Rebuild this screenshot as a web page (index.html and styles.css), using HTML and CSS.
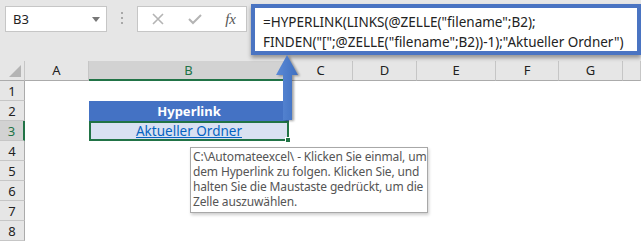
FILE: index.html
```html
<!DOCTYPE html>
<html lang="de">
<head>
    <meta charset="UTF-8">
    <title>HYPERLINK - Aktueller Ordner</title>
    <link rel="stylesheet" href="styles.css">
</head>
<body>
    <div class="toolbar">
        <div class="name-box">
            <span>B3</span>
            <span class="drop"></span>
        </div>
        <div class="grip"><i></i><i></i><i></i></div>
        <div class="fx-box">
            <svg width="14" height="14" viewBox="0 0 14 14"><path d="M2 2 L12 12 M12 2 L2 12" stroke="#b4b4b4" stroke-width="1.6" fill="none"/></svg>
            <svg width="16" height="14" viewBox="0 0 16 14"><path d="M2 7 L6 11 L14 3" stroke="#b4b4b4" stroke-width="2" fill="none"/></svg>
            <span class="fx">fx</span>
        </div>
        <div class="formula">
            =HYPERLINK(LINKS(@ZELLE("filename";B2);<br>
            FINDEN("[";@ZELLE("filename";B2))-1);"Aktueller Ordner")
        </div>
    </div>

    <div class="sheet">
        <div class="corner"><span></span></div>
        <div class="col">A</div>
        <div class="col active">B</div>
        <div class="col">C</div>
        <div class="col">D</div>
        <div class="col">E</div>
        <div class="col">F</div>
        <div class="col">G</div>
        <div class="col"></div>

        <div class="row-h">1</div>
        <div class="row-h">2</div>
        <div class="cell head">Hyperlink</div>
        <div class="row-h active">3</div>
        <div class="cell link"><a href="#">Aktueller Ordner</a><span class="handle"></span></div>
        <div class="row-h">4</div>
        <div class="row-h">5</div>
        <div class="row-h">6</div>
        <div class="row-h">7</div>
        <div class="row-h">8</div>

        <svg class="arrow" width="26" height="70" viewBox="0 0 26 70">
            <defs>
                <linearGradient id="shaft" x1="0" x2="1">
                    <stop offset="0" stop-color="#5b8ad6"/>
                    <stop offset="1" stop-color="#3f6fc0"/>
                </linearGradient>
            </defs>
            <path d="M12 1 L23 21 L17 21 L17 66 L8 66 L8 21 L1 21 Z" fill="url(#shaft)"/>
        </svg>

        <div class="tip">C:\Automateexcel\ - Klicken Sie einmal, um<br>dem Hyperlink zu folgen. Klicken Sie, und<br>halten Sie die Maustaste gedrückt, um die<br>Zelle auszuwählen.</div>
    </div>
</body>
</html>
```

FILE: styles.css
```css
* {
    margin: 0;
    padding: 0;
    box-sizing: border-box;
}

body {
    width: 641px;
    height: 241px;
    overflow: hidden;
    font-family: 'Noto Sans', 'Open Sans', sans-serif;
    background: #fff;
    color: #222;
}

.toolbar {
    height: 61px;
    background: #e6e6e6;
    display: flex;
    align-items: flex-start;
    padding-left: 5px;
}

.name-box {
    margin-top: 6px;
    width: 102px;
    height: 26px;
    background: #fff;
    border: 1px solid #c6c6c6;
    display: flex;
    align-items: center;
    justify-content: space-between;
    padding: 0 6px 0 7px;
    font-size: 13px;
}

.drop {
    width: 0;
    height: 0;
    border-left: 4px solid transparent;
    border-right: 4px solid transparent;
    border-top: 5px solid #777;
}

.grip {
    width: 30px;
    margin-top: 12px;
    display: flex;
    flex-direction: column;
    align-items: center;
    gap: 3px;
}

.grip i {
    width: 2px;
    height: 2px;
    background: #a8a8a8;
}

.fx-box {
    margin-top: 6px;
    width: 110px;
    height: 26px;
    background: #fff;
    border: 1px solid #c6c6c6;
    display: flex;
    align-items: center;
    justify-content: space-between;
    padding: 0 10px 0 13px;
}

.fx {
    font-family: 'Liberation Serif', serif;
    font-style: italic;
    font-size: 15px;
    color: #555;
}

.formula {
    margin: 4px 0 0 4px;
    flex: 1;
    height: 51px;
    background: #fff;
    border: 4px solid #4a74c2;
    box-shadow: 0 3px 4px rgba(0, 0, 0, 0.35);
    padding: 4px 0 0 8px;
    font-size: 13.5px;
    line-height: 20px;
    color: #222;
    white-space: nowrap;
    position: relative;
    z-index: 2;
}

.sheet {
    position: relative;
    display: grid;
    grid-template-columns: 25px 64px 200px 64px 64px 79px 63px 64px 18px;
    grid-template-rows: 20px repeat(8, 20px);
    font-size: 13px;
}

.corner {
    background: #e6e6e6;
    border-right: 1px solid #c6c6c6;
    border-bottom: 1px solid #ababab;
    position: relative;
}

.corner span {
    position: absolute;
    right: 3px;
    bottom: 3px;
    width: 0;
    height: 0;
    border-left: 12px solid transparent;
    border-bottom: 12px solid #b4b4b4;
}

.col {
    background: #e6e6e6;
    border-right: 1px solid #c6c6c6;
    border-bottom: 1px solid #ababab;
    text-align: center;
    line-height: 19px;
    color: #222;
}

.col.active {
    background: #d2d2d2;
    color: #217346;
    border-bottom: 2px solid #217346;
}

.row-h {
    grid-column: 1;
    background: #e6e6e6;
    border-right: 1px solid #ababab;
    border-bottom: 1px solid #c6c6c6;
    text-align: center;
    line-height: 20px;
}

.row-h.active {
    background: #d2d2d2;
    color: #217346;
    border-right: 2px solid #217346;
}

.cell {
    grid-column: 3;
    text-align: center;
    line-height: 20px;
    position: relative;
}

.head {
    background: #4472c4;
    color: #fff;
    font-weight: bold;
}

.link {
    background: #d9e1f2;
    border: 2px solid #217346;
    line-height: 16px;
    font-size: 13.5px;
}

.link a {
    color: #0563c1;
    text-decoration: underline;
}

.handle {
    position: absolute;
    right: -4px;
    bottom: -4px;
    width: 6px;
    height: 6px;
    background: #217346;
    border: 1px solid #fff;
}

.arrow {
    position: absolute;
    left: 275px;
    top: -7px;
    z-index: 3;
    filter: drop-shadow(2px 1px 1px rgba(0, 0, 0, 0.35));
}

.tip {
    position: absolute;
    left: 190px;
    top: 86px;
    width: 238px;
    height: 66px;
    background: #fff;
    border: 1px solid #a8a8a8;
    box-shadow: 1px 2px 3px rgba(0, 0, 0, 0.2);
    padding: 1px 2px;
    font-size: 12px;
    letter-spacing: -0.15px;
    line-height: 15px;
    color: #555;
    white-space: nowrap;
}
```
